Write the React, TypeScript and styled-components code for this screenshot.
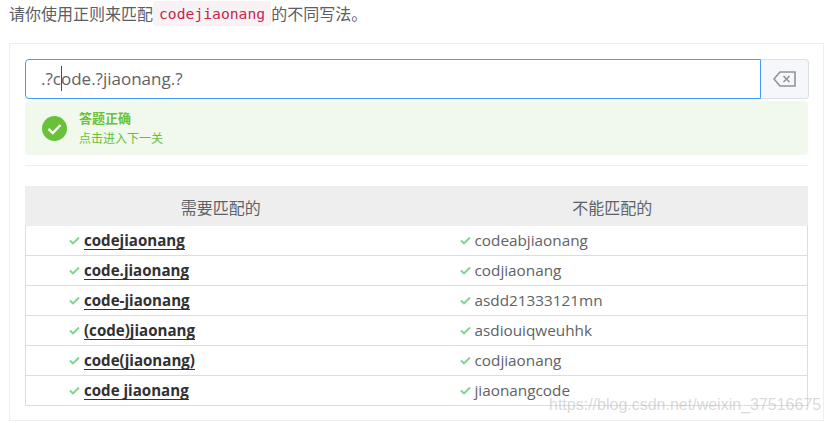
import React from "react";
import styled, { createGlobalStyle } from "styled-components";

const GlobalStyle = createGlobalStyle`
  html, body {
    margin: 0;
    padding: 0;
    background: #fff;
    overflow: hidden;
  }
  body {
    font-family: "Open Sans", "Noto Sans CJK SC", sans-serif;
    color: #606266;
  }
`;

const SPage = styled.div`
  position: relative;
  width: 830px;
  height: 423px;
  padding: 1px 6px 0 9px;
  box-sizing: border-box;
`;

const SIntro = styled.p`
  margin: 0 0 16px;
  height: 26px;
  box-sizing: border-box;
  padding-bottom: 2px;
  display: flex;
  align-items: center;
  font-family: "Noto Sans CJK SC", sans-serif;
  font-size: 16px;
  color: #5a5e66;
`;

const SCode = styled.code`
  align-self: flex-start;
  padding: 0 6px;
  height: 25px;
  line-height: 26px;
  border-radius: 3px;
  background: #f9f2f4;
  color: #c7254e;
  font-family: "DejaVu Sans Mono", monospace;
  font-size: 14.7px;
`;

const SPanel = styled.section`
  box-sizing: border-box;
  width: 815px;
  height: 378px;
  padding: 15px;
  border: 1px solid #ebeef5;
`;

const SInputRow = styled.div`
  display: flex;
  height: 40px;
`;

const SInput = styled.div`
  flex: 1;
  box-sizing: border-box;
  padding-left: 15px;
  border: 1px solid #409eff;
  border-radius: 4px 0 0 4px;
  font-size: 17px;
  line-height: 38px;
  color: #606266;
`;

const SCaret = styled.span`
  position: relative;
  &::after {
    content: "";
    position: absolute;
    left: 0;
    top: -1px;
    width: 1px;
    height: 25px;
    background: #4a4d55;
  }
`;

const SClear = styled.div`
  box-sizing: border-box;
  width: 48px;
  margin-right: -1px;
  display: flex;
  align-items: center;
  justify-content: center;
  background: #f5f7fa;
  border: 1px solid #dcdfe6;
  border-left: 0;
  border-radius: 0 4px 4px 0;
`;

const SAlert = styled.div`
  display: flex;
  align-items: center;
  gap: 12px;
  height: 54px;
  margin-top: 2px;
  padding-left: 17px;
  box-sizing: border-box;
  background: #f0f9eb;
  border-radius: 4px;
  color: #67c23a;
  font-family: "Noto Sans CJK SC", sans-serif;
`;

const SAlertTitle = styled.div`
  font-size: 13px;
  font-weight: 700;
  line-height: 18px;
`;

const SAlertText = styled.div`
  font-size: 12px;
  line-height: 18px;
  margin-top: 2px;
`;

const SDivider = styled.hr`
  margin: 10px 0 20px;
  border: 0;
  border-top: 1px solid #ebeef5;
`;

const STable = styled.div`
  display: grid;
  grid-template-columns: 1fr 1fr;
`;

const SHead = styled.div`
  height: 40px;
  line-height: 42px;
  text-align: center;
  background: #eee;
  font-family: "Noto Sans CJK SC", sans-serif;
  font-size: 16px;
  color: #5f6368;
`;

const SCell = styled.div<{ $right?: boolean }>`
  box-sizing: border-box;
  height: 30px;
  display: flex;
  align-items: center;
  gap: 4px;
  padding-left: 43px;
  border-bottom: 1px solid #ddd;
  border-left: ${(p) => (p.$right ? "0" : "1px solid #ddd")};
  border-right: ${(p) => (p.$right ? "1px solid #ddd" : "0")};
`;

const SMatch = styled.strong`
  font-size: 15.1px;
  font-weight: 700;
  color: #303133;
  line-height: 18px;
  border-bottom: 1px solid #303133;
`;

const SNoMatch = styled.span`
  font-size: 15.3px;
  line-height: 20px;
  margin-bottom: 2px;
  color: #606266;
`;

const SWatermark = styled.div`
  position: absolute;
  left: 549px;
  top: 396px;
  font-family: "Liberation Sans", sans-serif;
  font-size: 16px;
  color: rgba(170, 170, 170, 0.45);
  white-space: nowrap;
`;

const Check = () => (
  <svg width="11" height="9" viewBox="0 0 11 9" fill="none" aria-hidden="true">
    <path d="M1 4.5 L4 7.5 L10 1.5" stroke="#7ad68d" strokeWidth="1.9" />
  </svg>
);

const SuccessIcon = () => (
  <svg width="25" height="25" viewBox="0 0 25 25" aria-hidden="true">
    <circle cx="12.5" cy="12.5" r="12.5" fill="#67c23a" />
    <path d="M6.5 13 L10.8 17 L18.5 9" fill="none" stroke="#fff" strokeWidth="2.4" />
  </svg>
);

const ClearIcon = () => (
  <svg width="23" height="16" viewBox="0 0 23 16" fill="none" aria-hidden="true">
    <path d="M22 1 H7 L1 8 L7 15 H22 Z" stroke="#909399" strokeWidth="1.6" />
    <path d="M10.5 5 L16.5 11 M16.5 5 L10.5 11" stroke="#909399" strokeWidth="1.6" />
  </svg>
);

const rows = [
  ["codejiaonang", "codeabjiaonang"],
  ["code.jiaonang", "codjiaonang"],
  ["code-jiaonang", "asdd21333121mn"],
  ["(code)jiaonang", "asdiouiqweuhhk"],
  ["code(jiaonang)", "codjiaonang"],
  ["code jiaonang", "jiaonangcode"],
];

export default function App() {
  return (
    <SPage>
      <GlobalStyle />
      <SIntro>
        请你使用正则来匹配<SCode>codejiaonang</SCode>的不同写法。
      </SIntro>
      <SPanel>
        <SInputRow>
          <SInput>
            .?c<SCaret />ode.?jiaonang.?
          </SInput>
          <SClear>
            <ClearIcon />
          </SClear>
        </SInputRow>
        <SAlert>
          <SuccessIcon />
          <div>
            <SAlertTitle>答题正确</SAlertTitle>
            <SAlertText>点击进入下一关</SAlertText>
          </div>
        </SAlert>
        <SDivider />
        <STable>
          <SHead>需要匹配的</SHead>
          <SHead>不能匹配的</SHead>
          {rows.map(([good, bad], i) => (
            <React.Fragment key={i}>
              <SCell>
                <Check />
                <SMatch>{good}</SMatch>
              </SCell>
              <SCell $right>
                <Check />
                <SNoMatch>{bad}</SNoMatch>
              </SCell>
            </React.Fragment>
          ))}
        </STable>
      </SPanel>
      <SWatermark>https://blog.csdn.net/weixin_37516675</SWatermark>
    </SPage>
  );
}
